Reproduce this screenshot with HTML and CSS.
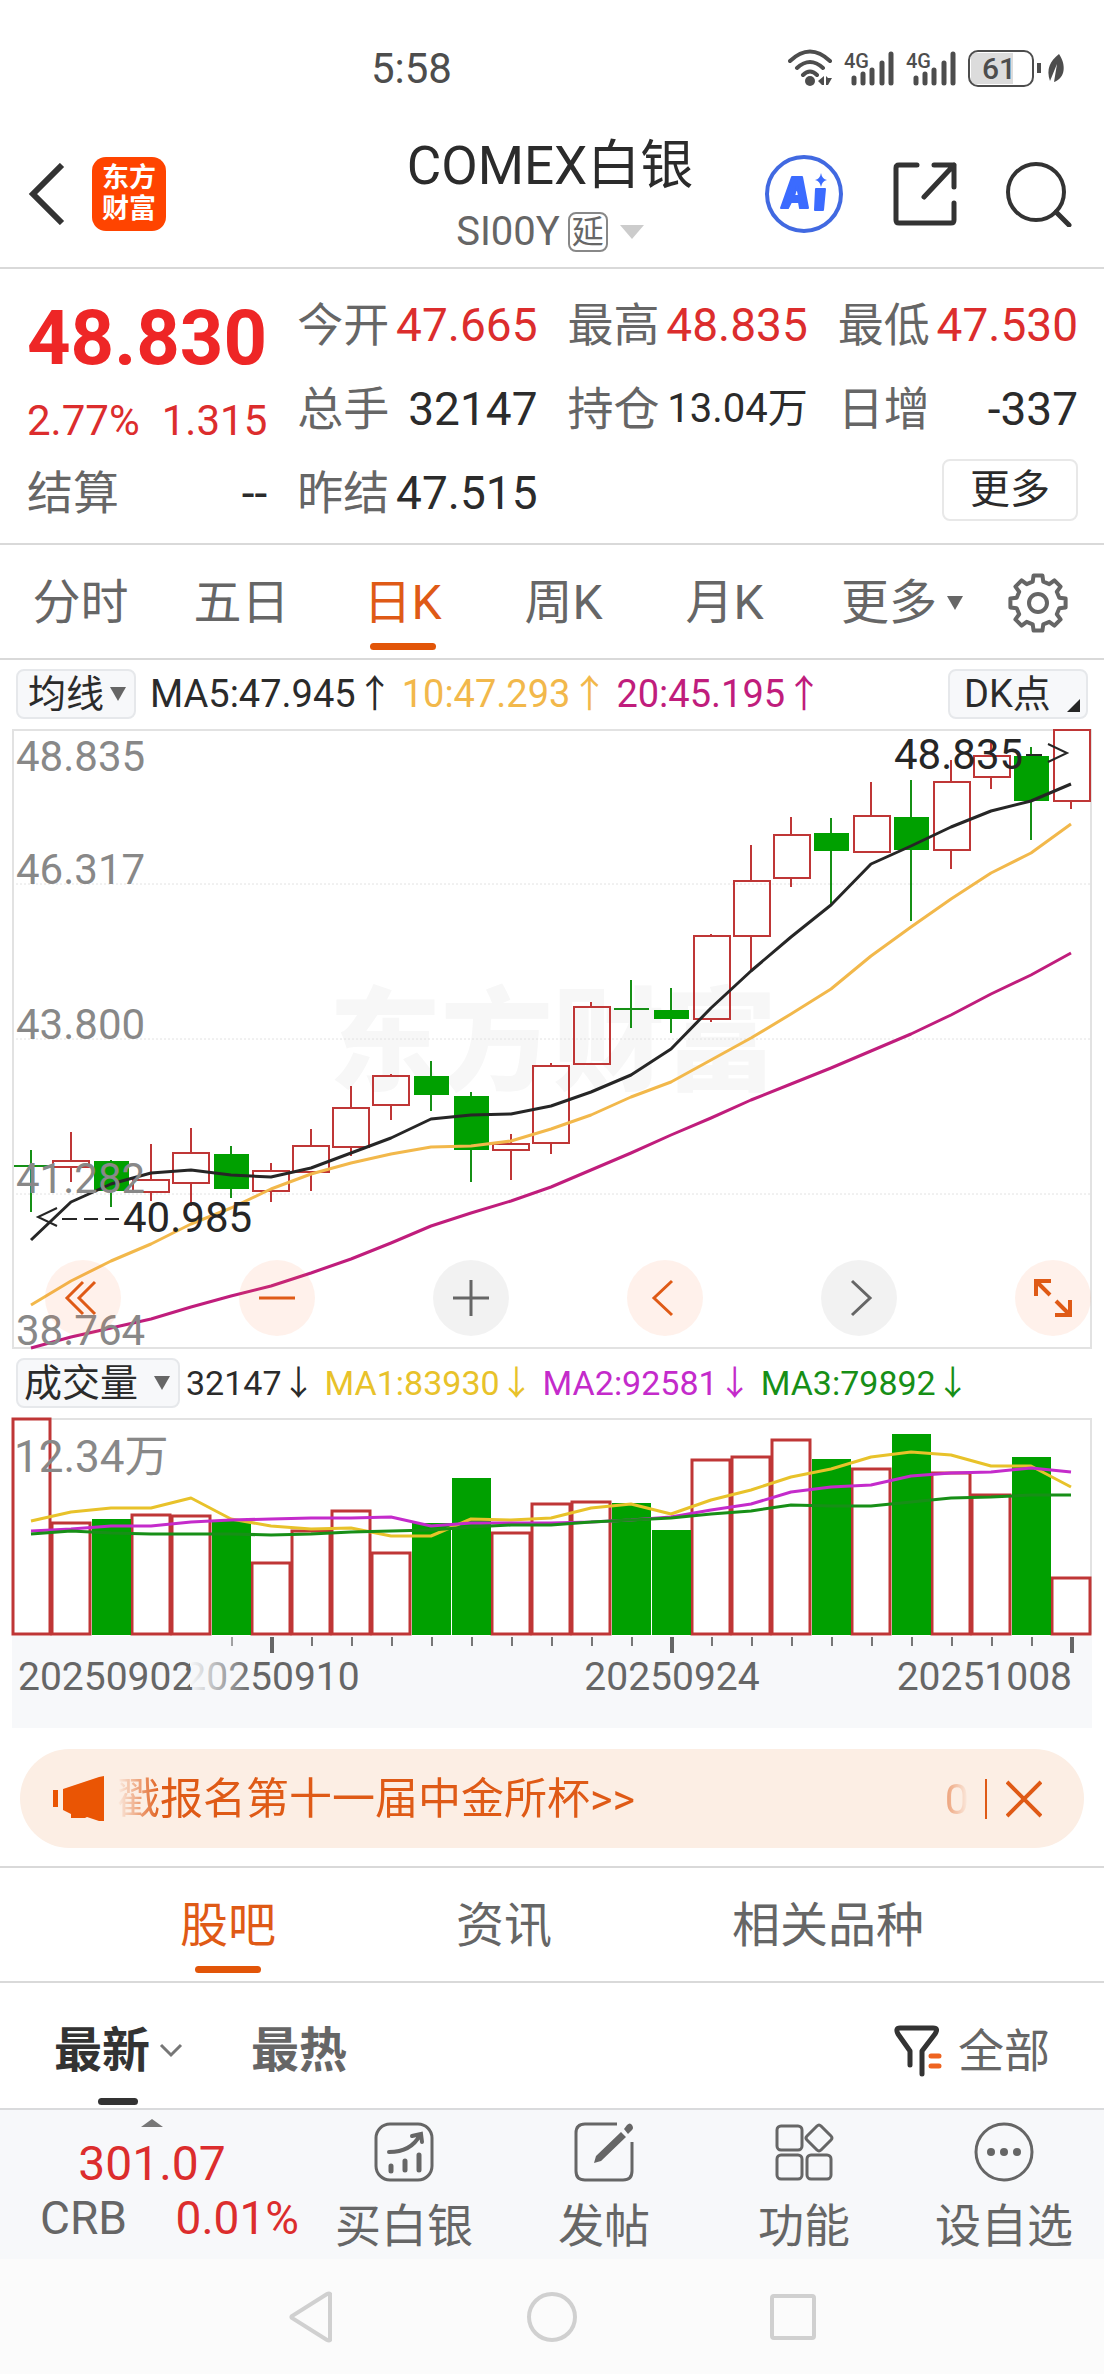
FILE: index.html
```html
<!DOCTYPE html>
<html lang="zh-CN">
<head>
<meta charset="utf-8">
<meta name="viewport" content="width=device-width, initial-scale=1">
<title>COMEX白银</title>
<link rel="stylesheet" href="styles.css">
</head>
<body>
<div class="status">
  <time>5:58</time>
  <svg class="status-icons" width="278" height="40" viewBox="0 0 278 40" aria-hidden="true">
    <g fill="none" stroke="#4d4d4d" stroke-width="4" stroke-linecap="round">
      <path d="M2 12Q22-7 42 12M9 19Q22 7 35 19M15 26Q22 19 29 26"/>
    </g>
    <g fill="#4d4d4d">
      <circle cx="22" cy="32" r="5"/>
      <path d="M36 27v9h-2l-4-4zM38 27l2 2h4l-4 7h-2z"/>
    </g>
    <g stroke="#4d4d4d" stroke-width="5" stroke-linecap="round">
      <path d="M66 29v5M75 25v9M84 21v13M94 14v20M103 5v29M128 29v5M137 25v9M146 21v13M156 14v20M165 5v29"/>
    </g>
    <g class="net"><text x="56" y="19">4G</text><text x="118" y="19">4G</text></g>
    <rect x="183" y="4" width="42" height="31" fill="#dcdcdc"/>
    <rect x="181" y="2" width="64" height="35" rx="9" fill="none" stroke="#4d4d4d" stroke-width="2"/>
    <text class="battery" x="211" y="30" text-anchor="middle">61</text>
    <path d="M251 14v10" stroke="#4d4d4d" stroke-width="4"/>
    <path d="M271 5c7 10 7 24-5 28l3-18-7 17c-4-12 0-20 9-27z" fill="#4d4d4d"/>
  </svg>
</div>

<header class="top">
  <div class="top-left">
    <button class="icon-btn" aria-label="返回"><svg width="38" height="62" viewBox="0 0 38 62" fill="none" stroke="#333" stroke-width="6"><path d="M34 2L5 31l29 29"/></svg></button>
    <a class="logo" href="#"><span>东方</span><span>财富</span></a>
  </div>
  <div class="title">
    <h1>COMEX白银</h1>
    <p>SI00Y<span class="delay">延</span><i class="tri tri-light"></i></p>
  </div>
  <div class="top-right">
    <button class="icon-btn" aria-label="AI"><svg width="80" height="80" viewBox="0 0 80 80">
      <circle cx="40" cy="40" r="37" fill="none" stroke="#4169e1" stroke-width="4"/>
      <g fill="#3b6bff" stroke="#3b6bff" stroke-width="2" stroke-linejoin="round"><path fill-rule="evenodd" d="M28 23h10l6 31h-8l-1-6h-8l-3 6h-7zM33 32l-3 10h5z"/><path d="M52 35h9l-2 21h-8z"/></g>
      <path d="M57 19q1 6 6 7-5 1-6 7-1-6-6-7 5-1 6-7z" fill="#3b6bff"/>
    </svg></button>
    <button class="icon-btn" aria-label="分享"><svg width="64" height="64" viewBox="0 0 64 64" fill="none" stroke="#333" stroke-width="5" stroke-linecap="round" stroke-linejoin="round"><path d="M24 3H6q-3 0-3 3v52q0 3 3 3h52q3 0 3-3V41M41 3h20v22M61 3L31 35"/></svg></button>
    <button class="icon-btn" aria-label="搜索"><svg width="66" height="66" viewBox="0 0 66 66" fill="none" stroke="#333" stroke-width="4" stroke-linecap="round"><circle cx="30" cy="31" r="28"/><path d="M50 51l13 13" stroke-width="5"/></svg></button>
  </div>
</header>

<section class="quote">
  <div class="last">
    <strong>48.830</strong>
    <div class="change"><span>2.77%</span><span>1.315</span></div>
  </div>
  <div class="cell"><span>今开</span><b class="red">47.665</b></div>
  <div class="cell"><span>最高</span><b class="red">48.835</b></div>
  <div class="cell"><span>最低</span><b class="red">47.530</b></div>
  <div class="cell"><span>总手</span><b>32147</b></div>
  <div class="cell"><span>持仓</span><b class="small">13.04万</b></div>
  <div class="cell"><span>日增</span><b>-337</b></div>
  <div class="cell"><span>结算</span><b>--</b></div>
  <div class="cell"><span>昨结</span><b>47.515</b></div>
  <div class="cell more-cell"><button class="more">更多</button></div>
</section>

<nav class="periods">
  <button>分时</button><button>五日</button><button class="on">日K</button><button>周K</button><button>月K</button>
  <button>更多<i class="tri"></i></button>
  <button aria-label="设置"><svg width="60" height="60" viewBox="-30 -30 60 60" fill="none" stroke="#666" stroke-width="4" stroke-linejoin="round"><path d="M-5.3-21.3L-4.4-27.6H4.4L5.3-21.3 11.3-18.8 16.4-22.6 22.6-16.4 18.8-11.3 21.3-5.3 27.6-4.4V4.4L21.3 5.3 18.8 11.3 22.6 16.4 16.4 22.6 11.3 18.8 5.3 21.3 4.4 27.6H-4.4L-5.3 21.3-11.3 18.8-16.4 22.6-22.6 16.4-18.8 11.3-21.3 5.3-27.6 4.4V-4.4L-21.3-5.3-18.8-11.3-22.6-16.4-16.4-22.6-11.3-18.8Z"/><circle r="9"/></svg></button>
</nav>

<div class="legend">
  <button class="chip">均线<i class="tri"></i></button>
  <div class="ma"><span>MA5:47.945↑</span><span class="c-yellow">10:47.293↑</span><span class="c-pink">20:45.195↑</span></div>
  <button class="chip chip-dk">DK点<i class="corner"></i></button>
</div>

<div class="chart">
  <svg viewBox="12 729 1080 620" role="img" aria-label="日K线图">
    <text class="mark" x="553" y="1082" text-anchor="middle">东方财富</text>
    <g class="grid"><path d="M12 884H1092M12 1039H1092M12 1194H1092"/></g>
    <rect class="frame" x="13" y="730" width="1078" height="618"/>
    <g class="up">
      <path d="M71 1132v29m0 6v15M151 1144v36m0 12v9M191 1128v25m0 30v23M271 1163v8m0 20v11M311 1129v17m0 26v19M351 1086v22m0 39v9M391 1074v2m0 29v15M511 1134v10m0 6v30M551 1063v3m0 77v11M591 1002v5m0 57v1M711 934v2m0 83v3M751 845v36m0 55v34M791 817v18m0 43v9M871 782v34m0 36v1M951 760v22m0 68v19M991 743v13m0 21v12M1071 801v8"/>
      <rect x="53" y="1161" width="36" height="6"/><rect x="133" y="1180" width="36" height="12"/><rect x="173" y="1153" width="36" height="30"/>
      <rect x="253" y="1171" width="36" height="20"/><rect x="293" y="1146" width="36" height="26"/><rect x="333" y="1108" width="36" height="39"/>
      <rect x="373" y="1076" width="36" height="29"/><rect x="493" y="1144" width="36" height="6"/><rect x="533" y="1066" width="36" height="77"/>
      <rect x="574" y="1007" width="36" height="57"/><rect x="694" y="936" width="36" height="83"/><rect x="734" y="881" width="36" height="55"/>
      <rect x="774" y="835" width="36" height="43"/><rect x="854" y="816" width="36" height="36"/><rect x="934" y="782" width="36" height="68"/>
      <rect x="974" y="756" width="36" height="21"/><rect x="1054" y="730" width="36" height="71"/>
    </g>
    <g class="down">
      <path d="M31 1150v62M14 1166h36M111 1160v47M231 1146v52M431 1061v50M471 1092v90M631 980v48M614 1009h35M671 988v45M831 818v87M911 780v141M1031 747v93"/>
      <rect x="94" y="1161" width="35" height="30"/><rect x="214" y="1154" width="35" height="35"/><rect x="414" y="1076" width="35" height="19"/>
      <rect x="454" y="1096" width="35" height="54"/><rect x="654" y="1010" width="35" height="9"/><rect x="814" y="833" width="35" height="18"/>
      <rect x="894" y="817" width="35" height="33"/><rect x="1014" y="756" width="35" height="45"/>
    </g>
    <g class="line">
      <polyline stroke="#262626" points="31,1240 71,1202 111,1184 151,1173 191,1170 231,1175 271,1177 311,1168 351,1153 391,1138 431,1119 471,1115 511,1114 551,1106 591,1092 631,1075 671,1049 711,1008 751,971 791,937 831,905 871,864 911,846 951,827 991,811 1031,801 1071,784"/>
      <polyline stroke="#f2b84b" points="31,1305 71,1281 111,1261 151,1244 191,1224 231,1208 271,1189 311,1174 351,1163 391,1154 431,1147 471,1146 511,1141 551,1129 591,1115 631,1097 671,1082 711,1060 751,1038 791,1014 831,989 871,956 911,927 951,899 991,873 1031,853 1071,824"/>
      <polyline stroke="#c01d7c" points="31,1348 71,1337 111,1328 151,1319 191,1307 231,1296 271,1286 311,1273 351,1259 391,1243 431,1226 471,1213 511,1201 551,1187 591,1170 631,1153 671,1135 711,1118 751,1100 791,1084 831,1068 871,1051 911,1034 951,1015 991,994 1031,975 1071,953"/>
    </g>
    <g class="scale"><text x="16" y="771">48.835</text><text x="16" y="884">46.317</text><text x="16" y="1039">43.800</text><text x="16" y="1193">41.282</text><text x="16" y="1345">38.764</text></g>
    <g class="peak">
      <text x="123" y="1232">40.985</text><text x="894" y="769">48.835</text>
      <path d="M57 1208L38 1217l19 9M62 1219h15m7 0h14m7 0h14M1026 755h16M1048 744l19 9-19 9"/>
    </g>
  </svg>
  <div class="tools">
    <button aria-label="最早"><svg viewBox="0 0 40 40"><path d="M20 4L4 20l16 16M32 4L16 20l16 16"/></svg></button>
    <button aria-label="缩小"><svg viewBox="0 0 40 40"><path d="M2 20h36"/></svg></button>
    <button class="off" aria-label="放大"><svg viewBox="0 0 40 40"><path d="M2 20h36M20 2v36"/></svg></button>
    <button aria-label="向前"><svg viewBox="0 0 40 40"><path d="M27 3L9 20l18 17"/></svg></button>
    <button class="off" aria-label="向后"><svg viewBox="0 0 40 40"><path d="M13 3l18 17-18 17"/></svg></button>
    <button aria-label="全屏"><svg viewBox="0 0 40 40"><path stroke-width="4" d="M3 18V3h15M3 3l14 14M37 22v15H22M37 37L23 23"/></svg></button>
  </div>
</div>

<div class="legend">
  <button class="chip chip-vol">成交量<i class="tri"></i></button>
  <div class="ma vol"><span>32147↓</span><span class="c-gold">MA1:83930↓</span><span class="c-purple">MA2:92581↓</span><span class="c-green">MA3:79892↓</span></div>
</div>

<div class="chart">
  <svg class="volume" viewBox="12 1418 1080 310" role="img" aria-label="成交量">
    <defs><linearGradient id="fade"><stop offset="0" stop-color="#f7f8fa"/><stop offset="1" stop-color="#f7f8fa" stop-opacity="0"/></linearGradient></defs>
    <rect x="12" y="1636" width="1080" height="92" fill="#f7f8fa"/>
    <path class="frame" d="M12 1419H1091V1634"/>
    <g class="up">
      <rect x="13" y="1419" width="37" height="215"/><rect x="52" y="1523" width="38" height="111"/><rect x="132" y="1515" width="38" height="119"/>
      <rect x="172" y="1516" width="38" height="118"/><rect x="252" y="1563" width="38" height="71"/><rect x="292" y="1531" width="38" height="103"/>
      <rect x="332" y="1511" width="38" height="123"/><rect x="372" y="1553" width="38" height="81"/><rect x="492" y="1533" width="38" height="101"/>
      <rect x="532" y="1504" width="38" height="130"/><rect x="572" y="1502" width="38" height="132"/><rect x="692" y="1460" width="38" height="174"/>
      <rect x="732" y="1457" width="38" height="177"/><rect x="772" y="1440" width="38" height="194"/><rect x="852" y="1469" width="38" height="165"/>
      <rect x="932" y="1473" width="38" height="161"/><rect x="972" y="1495" width="38" height="139"/><rect x="1052" y="1578" width="38" height="56"/>
    </g>
    <g class="down">
      <rect x="92" y="1519" width="39" height="116"/><rect x="212" y="1520" width="39" height="115"/><rect x="412" y="1523" width="39" height="112"/>
      <rect x="452" y="1478" width="39" height="157"/><rect x="612" y="1503" width="39" height="132"/><rect x="652" y="1530" width="39" height="105"/>
      <rect x="812" y="1459" width="39" height="176"/><rect x="892" y="1434" width="39" height="201"/><rect x="1012" y="1457" width="39" height="178"/>
    </g>
    <g class="line">
      <polyline stroke="#e8c22a" points="31,1521 71,1512 111,1508 151,1508 191,1498 231,1519 271,1526 311,1529 351,1528 391,1536 431,1536 471,1519 511,1520 551,1518 591,1508 631,1504 671,1514 711,1500 751,1490 791,1477 831,1469 871,1457 911,1452 951,1455 991,1466 1031,1466 1071,1487"/>
      <polyline stroke="#c42bcb" points="31,1531 71,1529 111,1526 151,1526 191,1522 231,1520 271,1519 311,1518 351,1518 391,1517 431,1526 471,1523 511,1523 551,1523 591,1522 631,1520 671,1517 711,1510 751,1504 791,1492 831,1487 871,1485 911,1476 951,1473 991,1472 1031,1468 1071,1472"/>
      <polyline stroke="#178f17" points="31,1534 71,1531 111,1533 151,1534 191,1534 231,1534 271,1535 311,1534 351,1532 391,1531 431,1530 471,1527 511,1525 551,1525 591,1522 631,1520 671,1518 711,1514 751,1511 791,1505 831,1506 871,1506 911,1502 951,1498 991,1497 1031,1495 1071,1495"/>
    </g>
    <text class="scale" x="14" y="1472">12.34万</text>
    <path stroke="#777" stroke-width="2" d="M232 1637v9M312 1637v9M352 1637v9M392 1637v9M432 1637v9M472 1637v9M512 1637v9M552 1637v9M592 1637v9M632 1637v9M712 1637v9M752 1637v9M792 1637v9M832 1637v9M872 1637v9M912 1637v9M952 1637v9M992 1637v9M1032 1637v9"/>
    <path stroke="#666" stroke-width="4" d="M272 1637v16M672 1637v16M1072 1637v16"/>
    <g class="dates">
      <text x="272" y="1690" text-anchor="middle">20250910</text>
      <rect x="190" y="1637" width="62" height="90" fill="url(#fade)"/>
      <text x="18" y="1690">20250902</text><text x="672" y="1690" text-anchor="middle">20250924</text><text x="1072" y="1690" text-anchor="end">20251008</text>
    </g>
  </svg>
</div>

<aside class="notice">
  <svg width="52" height="46" viewBox="0 0 52 46" fill="#ea5504"><path d="M0 14h5v17H0zM10 13L46 1l5-1v45h-5l-12-4-2 1H18v-4l-8-4z"/></svg>
  <a href="#"><span>戳报名第十一届中金所杯&gt;&gt;</span><span>0</span></a>
  <button class="icon-btn" aria-label="关闭"><svg width="36" height="38" viewBox="0 0 36 38" fill="none" stroke="#df5a16" stroke-width="4"><path d="M1 2l34 34M35 2L1 36"/></svg></button>
</aside>

<nav class="tabs"><button class="on">股吧</button><button>资讯</button><button>相关品种</button></nav>

<div class="sort">
  <button class="on">最新</button>
  <svg class="chev" width="24" height="16" viewBox="0 0 24 16" fill="none" stroke="#777" stroke-width="3"><path d="M2 2l10 10L22 2"/></svg>
  <button>最热</button>
  <button class="filter"><svg width="48" height="52" viewBox="0 0 48 52" fill="none" stroke-linecap="round" stroke-linejoin="round"><path stroke="#333" stroke-width="5" d="M16 40V26L4 9Q1 3 6 3h33q6 0 2 6L28 26v23"/><path stroke="#ee6320" stroke-width="5" d="M37 31h8M37 41h8"/></svg>全部</button>
</div>

<footer class="bar">
  <a class="index" href="#">
    <i class="tri-up"></i>
    <strong>301.07</strong>
    <span><em>CRB</em><b>0.01%</b></span>
  </a>
  <button><svg width="60" height="60" viewBox="0 0 60 60"><rect x="2" y="2" width="56" height="56" rx="14"/><path stroke-width="4" d="M15 30q22 0 31-17M38 14l9-2 1 8"/><path stroke-width="5" d="M17 44v5M31 39v9M45 33v15"/></svg>买白银</button>
  <button><svg width="60" height="60" viewBox="0 0 60 60"><path stroke-linecap="butt" d="M43 2H11Q2 2 2 11v38q0 9 9 9h38q9 0 9-9V20"/><path fill="#666" stroke="none" d="M47 10l5 5-25 24-7 2 2-7zM50 7l3-4q3-3 5 0t0 5l-4 4z"/></svg>发帖</button>
  <button><svg width="60" height="60" viewBox="0 0 60 60"><rect x="3" y="4" width="25" height="24" rx="4"/><rect x="3" y="33" width="25" height="24" rx="4"/><rect x="33" y="33" width="24" height="24" rx="4"/><path d="M43 4q2-2 4 0l10 10q2 2 0 4L47 28q-2 2-4 0L33 18q-2-2 0-4z"/></svg>功能</button>
  <button><svg width="60" height="60" viewBox="0 0 60 60"><circle cx="30" cy="30" r="28"/><g fill="#666" stroke="none"><circle cx="17" cy="30" r="4"/><circle cx="30" cy="30" r="4"/><circle cx="43" cy="30" r="4"/></g></svg>设自选</button>
</footer>

<div class="system">
  <button class="icon-btn" aria-label="返回"><svg width="46" height="52" viewBox="0 0 46 52"><path d="M42 3v46q-1 1-3 0L4 27q-1-1 0-2L39 3q2-1 3 0z"/></svg></button>
  <button class="icon-btn" aria-label="主页"><svg width="52" height="52" viewBox="0 0 52 52"><circle cx="26" cy="26" r="23"/></svg></button>
  <button class="icon-btn" aria-label="最近任务"><svg width="46" height="46" viewBox="0 0 46 46"><rect x="2" y="2" width="42" height="42" rx="2"/></svg></button>
</div>
</body>
</html>
```
FILE: styles.css
```css
* { box-sizing: border-box; }
body {
  margin: 0;
  background: #fff;
  color: #2b2b2b;
  font-family: Roboto, "Noto Sans CJK SC", sans-serif;
  font-size: 46px;
  line-height: 1;
}
button {
  padding: 0;
  border: 0;
  background: none;
  color: inherit;
  font: inherit;
  white-space: nowrap;
}
a { color: inherit; text-decoration: none; }
i, em { font-style: normal; }
b { font-weight: 400; }
svg { display: block; flex: none; }
h1, p { margin: 0; font-weight: 400; }

.icon-btn { display: block; }
.red { color: #dc2d2d; }
.tri {
  display: inline-block;
  border: 8px solid transparent;
  border-top: 14px solid #666;
  border-bottom: 0;
}
.tri-light { border-width: 14px 12px 0; border-top-color: #ccc; }

.status {
  display: flex;
  align-items: center;
  justify-content: space-between;
  padding: 48px 38px 10px 33.6%;
  color: #4d4d4d;
  font-size: 42px;
}
.status-icons text { fill: #4d4d4d; font-weight: 500; }
.status-icons .net { font-size: 20px; }
.status-icons .battery { font-size: 30px; }

.top {
  display: grid;
  grid-template-columns: 1fr auto 1fr;
  align-items: center;
  height: 169px;
  padding: 20px 32px 0 28px;
  border-bottom: 2px solid #d9d9d9;
}
.top-left { display: flex; align-items: center; gap: 26px; }
.logo {
  display: flex;
  flex-direction: column;
  align-items: center;
  justify-content: center;
  width: 74px;
  height: 74px;
  border-radius: 14px;
  background: #ff4400;
  color: #fff;
  font-size: 27px;
  font-weight: 700;
  line-height: 31px;
}
.title { padding-top: 10px; text-align: center; }
.title h1 { font-size: 53px; line-height: 66px; }
.title p {
  display: flex;
  align-items: center;
  justify-content: center;
  height: 66px;
  color: #666;
  font-size: 40px;
}
.delay {
  margin: 0 12px 0 8px;
  padding: 2px;
  border: 2px solid #888;
  border-radius: 8px;
  font-size: 32px;
}
.top-right { display: flex; align-items: center; justify-content: flex-end; gap: 49px; }

.quote {
  display: grid;
  grid-template-columns: repeat(4, minmax(0, 1fr));
  grid-auto-rows: 84px;
  column-gap: 30px;
  padding: 14px 26px 8px 27px;
  border-bottom: 2px solid #d9d9d9;
}
.cell { display: flex; align-items: center; justify-content: space-between; white-space: nowrap; }
.cell span { color: #666; }
.cell .small { font-size: 40px; }
.last { grid-row: span 2; padding-top: 12px; color: #ee2626; }
.last strong { display: block; font-size: 76px; line-height: 86px; }
.change { display: flex; justify-content: space-between; color: #dc2d2d; font-size: 42px; line-height: 80px; }
.more-cell { grid-column: 4; justify-content: flex-end; }
.more {
  width: 136px;
  height: 62px;
  margin-bottom: 6px;
  border: 2px solid #e8e8e8;
  border-radius: 8px;
  font-size: 40px;
}

.periods {
  display: grid;
  grid-template-columns: repeat(5, 161fr) 194fr 78fr;
  height: 115px;
  padding: 2px 27px 0 0;
  border-bottom: 2px solid #d9d9d9;
  color: #666;
  font-size: 48px;
}
.periods button { position: relative; display: flex; align-items: center; justify-content: center; }
.periods .tri { margin-left: 10px; }
.on { position: relative; color: #df5a16; }
.on::after {
  content: "";
  position: absolute;
  bottom: 8px;
  left: 50%;
  width: 66px;
  height: 7px;
  margin-left: -33px;
  border-radius: 4px;
  background: #e25508;
}

.legend {
  display: flex;
  align-items: center;
  height: 69px;
  padding: 0 16px 2px;
  font-size: 38px;
  white-space: nowrap;
}
.chip {
  display: flex;
  align-items: center;
  justify-content: space-between;
  gap: 6px;
  height: 50px;
  padding: 0 8px 0 10px;
  border: 2px solid #e6e8eb;
  border-radius: 8px;
  background: #f7f8fa;
}
.chip-dk { min-width: 140px; margin-left: auto; padding: 0 6px 0 14px; }
.chip-vol { gap: 16px; padding-left: 6px; }
.corner {
  align-self: flex-end;
  margin-bottom: 5px;
  border-left: 13px solid transparent;
  border-bottom: 13px solid #262626;
}
.ma { display: flex; gap: 8px; padding-left: 14px; }
.vol { gap: 9px; padding-left: 6px; font-size: 34px; }
.c-yellow { color: #f2b84b; }
.c-pink { color: #c01d7c; }
.c-gold { color: #e8c22a; }
.c-purple { color: #c42bcb; }
.c-green { color: #178f17; }

.chart { position: relative; padding: 0 12px; }
.chart > svg { width: 100%; height: auto; overflow: visible; }
.mark { fill: #f7f7f7; font-size: 112px; font-weight: 900; }
.grid { stroke: #e2e2e2; stroke-width: 1; stroke-dasharray: 2 2; }
.frame { fill: none; stroke: #e2e2e2; stroke-width: 2; }
.up { fill: none; stroke: #bf3636; stroke-width: 2; }
.down { stroke: #159015; stroke-width: 2; }
.down rect { fill: #00a000; stroke: none; }
.line { fill: none; stroke-width: 3; stroke-linejoin: round; }
.scale { fill: #888; font-size: 42px; }
.volume .scale { font-size: 44px; }
.volume .up { stroke-width: 3; }
.peak { fill: #262626; font-size: 42px; }
.peak path { fill: none; stroke: #262626; stroke-width: 2; }
.dates { fill: #666; font-size: 39px; }
.tools {
  position: absolute;
  right: 13px;
  bottom: 13px;
  left: 45px;
  display: flex;
  justify-content: space-between;
}
.tools button {
  display: flex;
  align-items: center;
  justify-content: center;
  width: 76px;
  height: 76px;
  border-radius: 50%;
  background: rgba(255, 120, 60, .1);
}
.tools svg { width: 40px; height: 40px; fill: none; stroke: #df5a16; stroke-width: 3; }
.tools .off { background: rgba(0, 0, 0, .05); }
.tools .off svg { stroke: #666; }

.notice {
  display: flex;
  align-items: center;
  height: 99px;
  margin: 21px 20px 18px;
  padding: 0 42px 0 33px;
  border-radius: 50px;
  background: #fceee4;
  color: #df5a16;
  font-size: 43px;
}
.notice a {
  display: flex;
  flex: 1;
  justify-content: space-between;
  margin: 0 16px 0 12px;
  line-height: 60px;
  -webkit-mask-image: linear-gradient(90deg, transparent, #000 44px, #000 calc(100% - 44px), transparent);
  mask-image: linear-gradient(90deg, transparent, #000 44px, #000 calc(100% - 44px), transparent);
}
.notice button { padding: 1px 0 1px 19px; border-left: 2px solid #df5a16; }

.tabs {
  display: flex;
  justify-content: space-evenly;
  height: 117px;
  border: solid #d9d9d9;
  border-width: 2px 0;
  color: #666;
  font-size: 48px;
}
.tabs button { padding-top: 3px; }

.sort {
  display: flex;
  align-items: center;
  height: 125px;
  padding: 10px 54px 0;
  color: #666;
  font-size: 48px;
  font-weight: 700;
}
.sort button { height: 100%; }
.sort .on { color: #333; }
.sort .on::after { bottom: 3px; width: 40px; margin-left: -4px; background: #333; }
.chev { margin: 0 68px 0 9px; }
.sort .filter { display: flex; align-items: center; gap: 16px; margin-left: auto; font-size: 46px; font-weight: 400; }

.bar {
  display: grid;
  grid-template-columns: 304fr repeat(4, 200fr);
  height: 151px;
  border-top: 2px solid #d9dadc;
  background: #f7f8fa;
  color: #666;
}
.bar button { display: flex; flex-direction: column; align-items: center; gap: 21px; padding-top: 12px; }
.bar svg { fill: none; stroke: #666; stroke-width: 3; stroke-linecap: round; }
.index { display: flex; flex-direction: column; align-items: center; padding: 9px 5px 0 40px; }
.index .tri-up { border: 11px solid transparent; border-top: 0; border-bottom: 8px solid #777; margin-right: 35px; }
.index strong { margin-right: 35px; color: #dc2d2d; font-size: 48px; font-weight: 400; line-height: 74px; }
.index span { display: flex; justify-content: space-between; width: 100%; line-height: 34px; }
.index b { color: #dc2d2d; }

.system {
  display: flex;
  align-items: center;
  justify-content: center;
  gap: 192px;
  min-height: 115px;
  background: #fbfbfb;
}
.system svg { fill: none; stroke: #d0d0d0; stroke-width: 4; }
```
